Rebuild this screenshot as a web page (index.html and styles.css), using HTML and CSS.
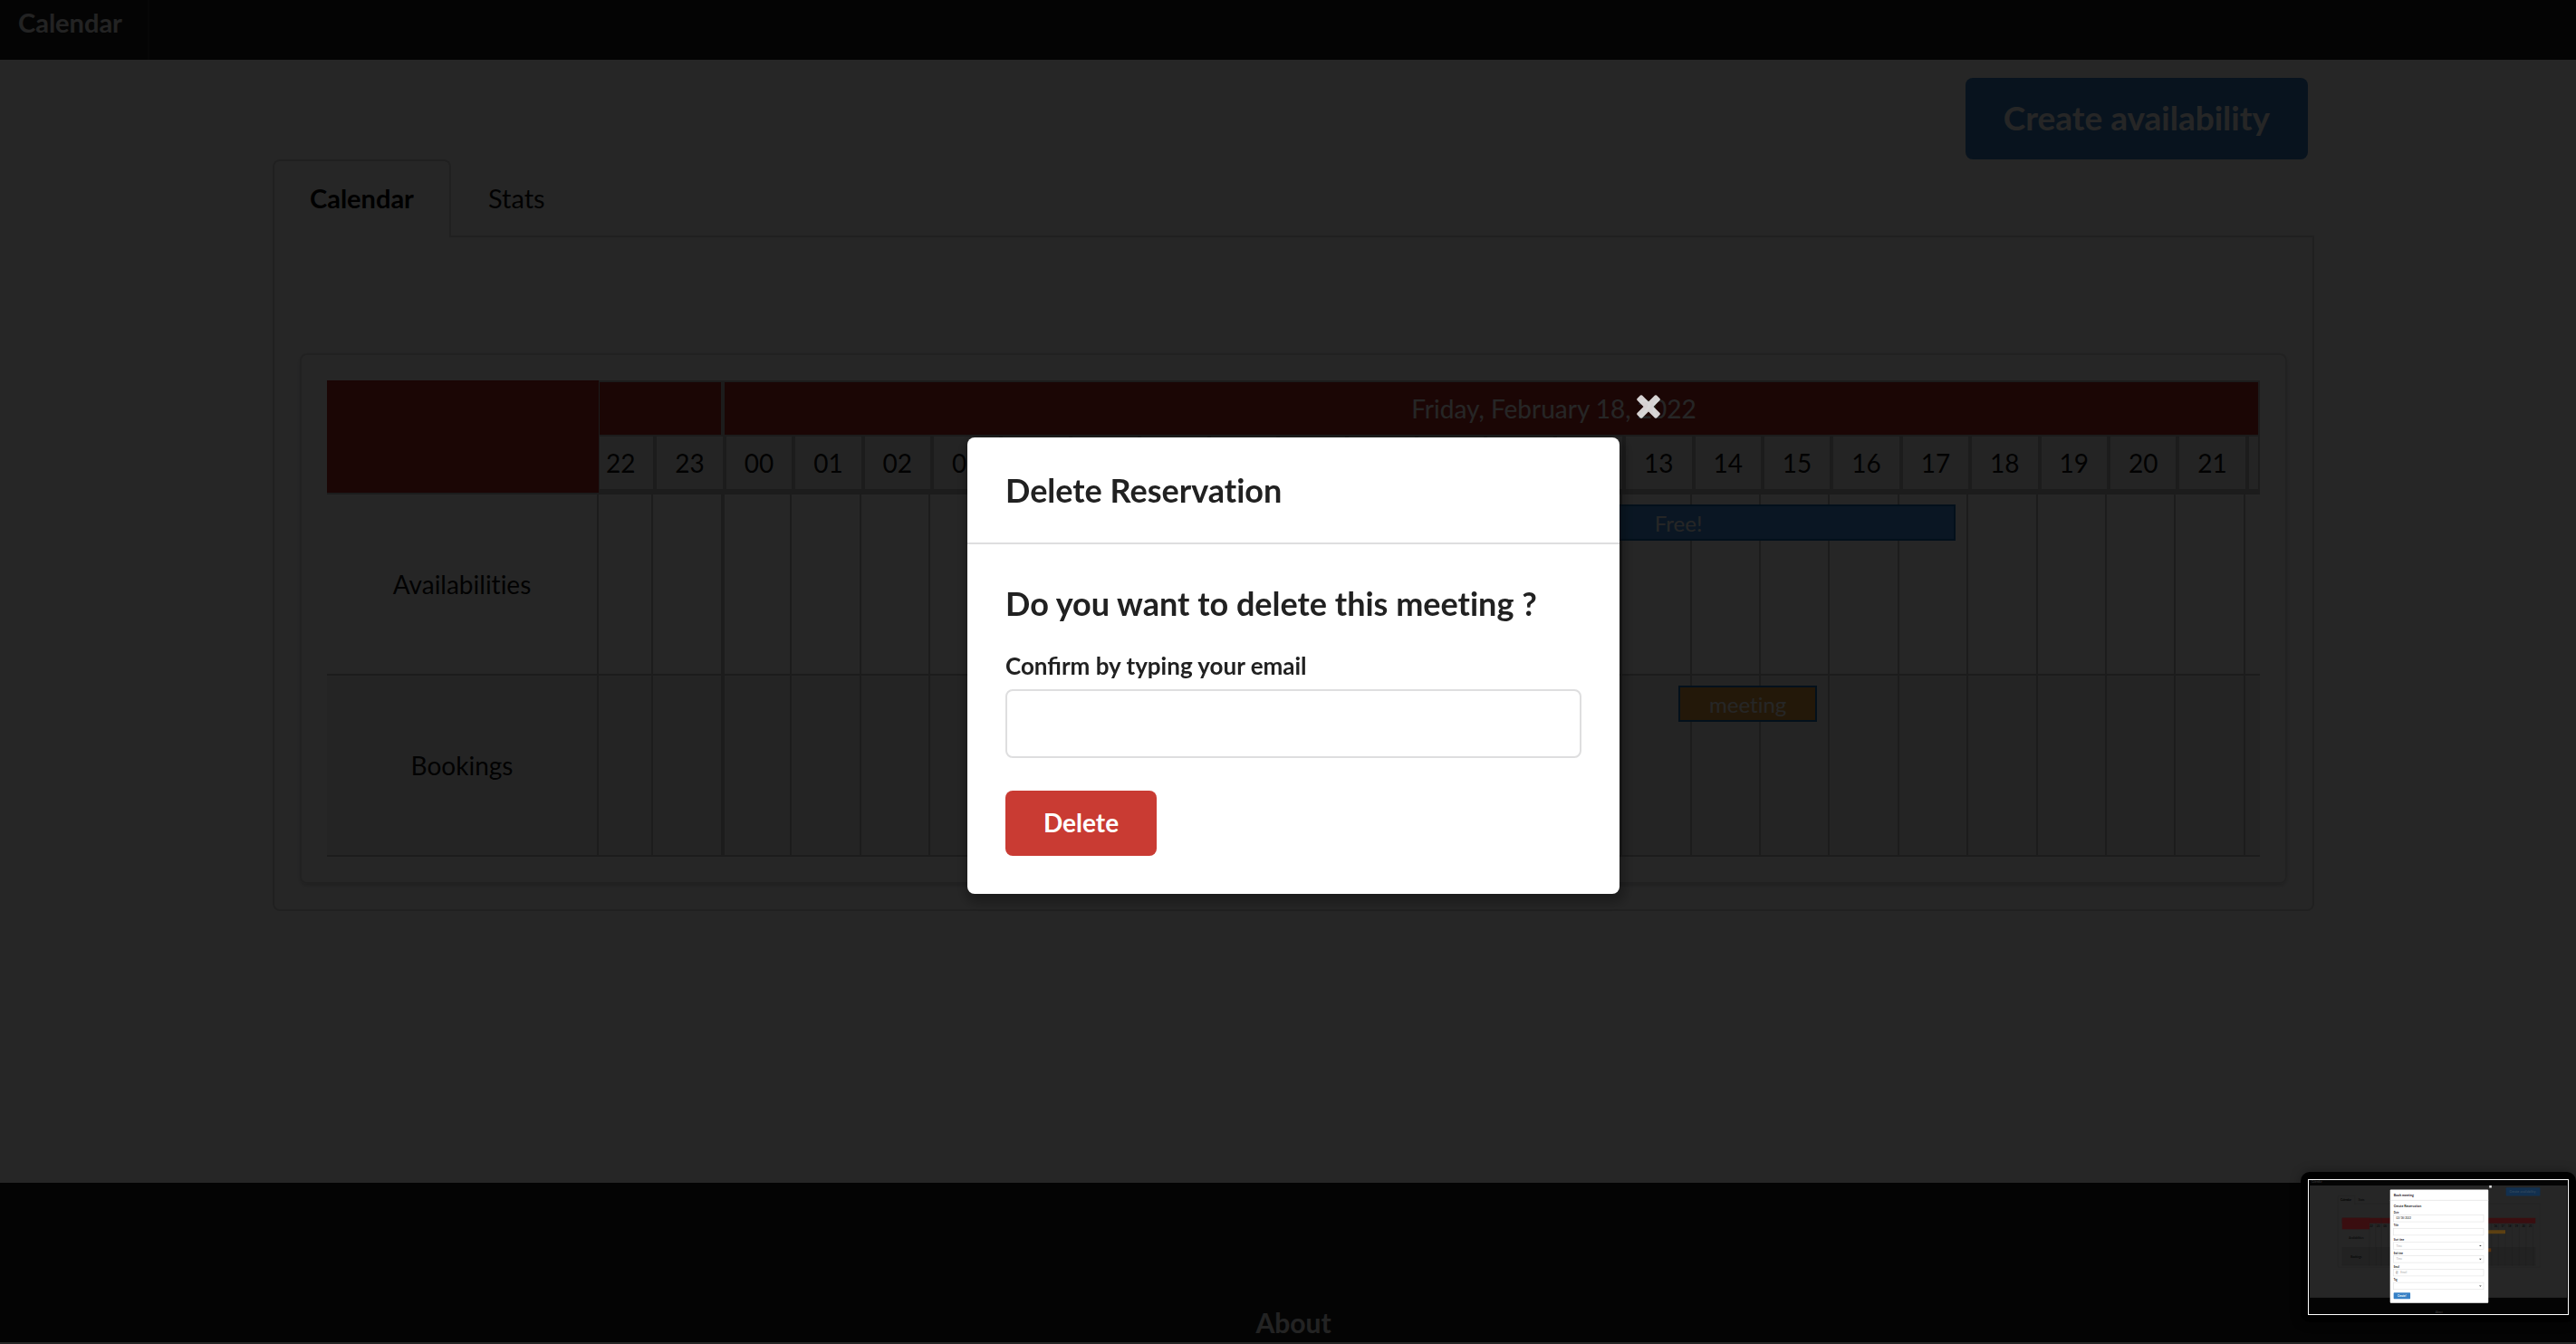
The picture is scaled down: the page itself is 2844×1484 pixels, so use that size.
FILE: index.html
```html
<!DOCTYPE html>
<html lang="en">
<head>
<meta charset="utf-8">
<title>Calendar</title>
<link rel="stylesheet" href="styles.css">
</head>
<body>
<nav class="menu"><a class="menu-item" href="#">Calendar</a></nav>

<main class="container">
  <div class="actions"><button class="button primary" type="button">Create availability</button></div>
  <div class="tabs">
    <a class="tab active" href="#calendar">Calendar</a>
    <a class="tab" href="#stats">Stats</a>
  </div>
  <section class="segment" id="calendar">
    <div class="card">
      <div class="timeline">
        <div class="corner"></div>
        <div class="scale">
          <div class="days"><span class="day first"></span><span class="day">Friday, February 18, 2022</span></div>
          <div class="hours">
            <span>22</span><span>23</span><span>00</span><span>01</span><span>02</span><span>03</span><span>04</span><span>05</span><span>06</span><span>07</span><span>08</span><span>09</span><span>10</span><span>11</span><span>12</span><span>13</span><span>14</span><span>15</span><span>16</span><span>17</span><span>18</span><span>19</span><span>20</span><span>21</span><span></span>
          </div>
        </div>
        <div class="group">Availabilities</div>
        <div class="lane">
          <div class="ticks"><i></i><i class="midnight"></i><i></i><i></i><i></i><i></i><i></i><i></i><i></i><i></i><i></i><i></i><i></i><i></i><i></i><i></i><i></i><i></i><i></i><i></i><i></i><i></i><i></i><i></i><i></i></div>
          <div class="event free" style="left:48.3%;width:33.4%">Free!</div>
        </div>
        <div class="group alt">Bookings</div>
        <div class="lane alt">
          <div class="ticks"><i></i><i class="midnight"></i><i></i><i></i><i></i><i></i><i></i><i></i><i></i><i></i><i></i><i></i><i></i><i></i><i></i><i></i><i></i><i></i><i></i><i></i><i></i><i></i><i></i><i></i><i></i></div>
          <div class="event booked" style="left:65%;width:8.35%">meeting</div>
        </div>
      </div>
    </div>
  </section>
</main>

<footer class="footer"><h4>About</h4></footer>

<div class="dimmer">
  <div class="modal" role="dialog" aria-modal="true" aria-labelledby="modal-title">
    <button class="close" type="button" aria-label="Close">
      <svg viewBox="0 0 28 28"><path d="M7 1.5 14 8.5 21 1.500Q22 .8 23 1.500L26.500 5Q27.200 6 26.500 7L19.500 14 26.500 21Q27.200 22 26.500 23L23 26.500Q22 27.200 21 26.500L14 19.500 7 26.500Q6 27.200 5 26.500L1.500 23Q.8 22 1.500 21L8.500 14 1.500 7Q.8 6 1.500 5L5 1.500Q6 .8 7 1.500Z"/></svg>
    </button>
    <h2 class="modal-title" id="modal-title">Delete Reservation</h2>
    <form class="modal-body">
      <h3>Do you want to delete this meeting ?</h3>
      <label for="email">Confirm by typing your email</label>
      <input id="email" type="text">
      <button class="button negative" type="button">Delete</button>
    </form>
  </div>
</div>

<aside class="preview">
  <svg viewBox="0 0 864 450" role="img" aria-label="Book meeting window">
    <rect width="864" height="450" fill="#262626"/>
    <rect width="864" height="18" fill="#040404"/>
    <rect y="395" width="864" height="55" fill="#040404"/>
    <text x="6" y="10" class="pv-dim">Calendar</text>
    <rect x="659" y="25" width="115" height="28" rx="3" fill="#12304f"/>
    <text x="671" y="43" class="pv-btn">Create availability</text>
    <path d="M96 80V52h55v28h623v212H96Z" fill="none" stroke="#222" stroke-width="1"/>
    <text x="104" y="69" class="pv-tab bold">Calendar</text>
    <text x="164" y="69" class="pv-tab">Stats</text>
    <rect x="109" y="127" width="649" height="18" fill="#3a0e10"/>
    <rect x="109" y="127" width="92" height="38" fill="#3a0e10"/>
    <rect x="109" y="225" width="649" height="61" fill="#222"/>
    <path d="M201 165v121M221 145v141M241 127v159M265 145v141M610 145v141M634 145v141M657 145v141M680 145v141M704 145v141M727 145v141M750 145v141M109 286h649" stroke="#1e1e1e" stroke-width="1"/>
    <text x="202" y="158" class="pv-tab">22</text><text x="225" y="158" class="pv-tab">23</text><text x="248" y="158" class="pv-tab">00</text>
    <text x="619" y="158" class="pv-tab">16</text><text x="643" y="158" class="pv-tab">17</text><text x="666" y="158" class="pv-tab">18</text><text x="689" y="158" class="pv-tab">19</text><text x="713" y="158" class="pv-tab">20</text><text x="736" y="158" class="pv-tab">21</text>
    <text x="132" y="199" class="pv-tab">Availabilities</text>
    <text x="138" y="260" class="pv-tab">Bookings</text>
    <rect x="590" y="168" width="67" height="12" fill="#5c4012"/>
    <rect x="590" y="229" width="19" height="12" fill="#5c3410"/>
    <text x="422" y="446" class="pv-dim">About</text>
    <rect x="603" y="18" width="8" height="8" fill="#ddd"/>
    <rect x="270" y="32" width="330" height="381" rx="3" fill="#fff"/>
    <path d="M270 68h330" stroke="#ddd" stroke-width="2"/>
    <text x="282" y="55" class="pv-head">Book meeting</text>
    <text x="282" y="92" class="pv-head">Create Reservation</text>
    <g class="pv-label"><text x="282" y="112">Date</text><text x="282" y="156">Title</text><text x="282" y="204">Start time</text><text x="282" y="249">End time</text><text x="282" y="294">Email</text><text x="282" y="339">Tag</text></g>
    <g fill="#fff" stroke="#e4e4e4" stroke-width="2"><rect x="282" y="117" width="302" height="23"/><rect x="282" y="162" width="302" height="23"/><rect x="282" y="209" width="302" height="23"/><rect x="282" y="254" width="302" height="23"/><rect x="282" y="299" width="302" height="23"/><rect x="282" y="344" width="302" height="23"/></g>
    <text x="291" y="132" class="pv-value">02/18/2022</text>
    <g class="pv-hint"><text x="291" y="224">Time</text><text x="291" y="269">Time</text><text x="305" y="314">Email</text></g>
    <text x="289" y="314" class="pv-value">@</text>
    <path d="M569 219h8l-4 4ZM569 264h8l-4 4ZM569 354h8l-4 4Z" fill="#333"/>
    <rect x="282" y="378" width="56" height="21" rx="2" fill="#3881c6"/>
    <text x="295" y="392" class="pv-create">Create!</text>
  </svg>
</aside>
</body>
</html>
```
FILE: styles.css
```css
* { box-sizing: border-box; }

body {
  margin: 0;
  min-height: 100vh;
  display: flex;
  flex-direction: column;
  background: #fff;
  color: #111;
  font: 28px/40px Lato, "Liberation Sans", sans-serif;
  font-variant-ligatures: no-common-ligatures;
}

h2, h3, h4 { margin: 0; font-weight: 700; }
a { color: inherit; text-decoration: none; }
button, input { font: inherit; font-variant-ligatures: inherit; }

.menu { display: flex; height: 66px; background: #1b1c1d; color: #e6e6e6; font-size: 29px; }
.menu-item { padding: 5px 28px 0 20px; border-right: 2px solid #333; font-weight: 700; }

.container {
  flex: 1;
  width: 80%;
  max-width: 2254px;
  margin-left: auto;
  margin-right: auto;
  padding: 20px 0 60px;
  position: relative;
  left: 6px;
}

.actions { display: flex; justify-content: flex-end; padding-right: 7px; }
.button { border: 0; border-radius: 8px; color: #fff; font-weight: 700; padding: 0 42px 2px; cursor: pointer; }
.primary { height: 90px; background: #3881c6; font-size: 37px; }
.negative { height: 72px; background: #c93b33; }

.tabs { display: flex; position: relative; z-index: 1; margin-bottom: -2px; font-size: 29px; }
.tab { height: 86px; padding: 21px 39px; border: 2px solid transparent; border-bottom: 0; }
.tab.active { background: #fff; border-color: #d4d4d5; border-radius: 8px 8px 0 0; font-weight: 700; color: #000; }

.segment { border: 2px solid #d4d4d5; border-radius: 0 0 8px 8px; padding: 128px 28px 28px; }
.card { border: 2px solid #dededf; border-radius: 8px; padding: 28px; box-shadow: 0 2px 4px rgba(34,36,38,.2); }

.timeline { display: grid; grid-template-columns: 300px minmax(0, 1fr); }
.corner { background: #b52a24; border-bottom: 2px solid #bbb; }
.scale { border: 2px solid #bbb; border-left-width: 1px; border-bottom-width: 6px; overflow: hidden; }
.days { display: flex; height: 60px; border-bottom: 2px solid #bbb; background: #b52a24; color: #fff; }
.day { flex: 0 0 100%; text-align: center; line-height: 58px; }
.day.first { flex-basis: 138px; border-right: 4px solid #bbb; }
.hours, .ticks { display: flex; }
.hours { height: 58px; margin-left: -13px; background: #f0f0f0; }
.hours span { flex: 0 0 calc((100% - 10px) / 24); border-right: 4px solid #bbb; text-align: center; line-height: 58px; }
.group, .lane { height: 200px; border-bottom: 2px solid #bbb; }
.group { border-right: 2px solid #bbb; text-align: center; line-height: 198px; }
.lane { position: relative; overflow: hidden; }
.alt { background: #f0f0f0; }
.ticks { height: 100%; margin-left: -16px; }
.ticks i { flex: 0 0 calc((100% - 16px) / 24); border-right: 2px solid #bbb; }
.ticks .midnight { flex-basis: calc((100% - 16px) / 24 + 2px); margin-right: -2px; border-right-width: 4px; }
.event { position: absolute; top: 11px; height: 40px; border: 2px solid #1a6fb3; color: #fff; font-size: 24px; line-height: 37px; text-align: center; }
.free { background: #4296e6; }
.booked { background: #e6a23c; }

.footer { height: 178px; padding: 136px 0 0 12px; background: #1b1c1d; border-bottom: 2px solid #fff; color: #e6e6e6; text-align: center; }
.footer h4 { font-size: 30px; line-height: 36px; }

.dimmer {
  position: fixed;
  inset: 0;
  display: flex;
  align-items: center;
  justify-content: center;
  padding: 0 0 14px 12px;
  background: rgba(0,0,0,.85);
  z-index: 10;
}
.modal { position: relative; width: 720px; background: #fff; border-radius: 8px; box-shadow: 2px 6px 14px 4px rgba(0,0,0,.3); color: #212121; }
.modal-title { padding: 35px 42px; border-bottom: 2px solid #dededf; font-size: 36px; line-height: 46px; }
.modal-body { display: flex; flex-direction: column; align-items: flex-start; padding: 42px; }
.modal-body h3 { margin-bottom: 28px; font-size: 36px; line-height: 46px; }
.modal-body label { margin-bottom: 8px; font-size: 26px; line-height: 36px; font-weight: 700; font-variant-ligatures: normal; }
.modal-body input { width: 100%; height: 76px; margin-bottom: 36px; padding: 0 28px; border: 2px solid #dededf; border-radius: 8px; background: #fff; }
.close { position: absolute; top: -48px; right: -46px; width: 28px; height: 28px; padding: 0; border: 0; background: none; cursor: pointer; }
.close svg { display: block; width: 28px; height: 28px; fill: #fff; opacity: .82; }

.preview {
  position: fixed;
  right: 0;
  bottom: 24px;
  z-index: 20;
  padding: 8px;
  border-radius: 10px;
  background: #000;
  box-shadow: 0 0 12px rgba(0,0,0,.35);
}
.preview svg { display: block; width: 288px; height: 150px; border: 1px solid #fff; }
.pv-dim { font-size: 9px; font-weight: 700; fill: #333; }
.pv-btn { font-size: 11px; font-weight: 700; fill: #34495e; }
.pv-tab { font-size: 9px; fill: #000; }
.bold { font-weight: 700; }
.pv-head { font-size: 11px; font-weight: 700; fill: #222; }
.pv-label { font-size: 8px; font-weight: 700; fill: #222; }
.pv-value { font-size: 9px; fill: #222; }
.pv-hint { font-size: 9px; fill: #aaa; }
.pv-create { font-size: 9px; font-weight: 700; fill: #fff; }
```
